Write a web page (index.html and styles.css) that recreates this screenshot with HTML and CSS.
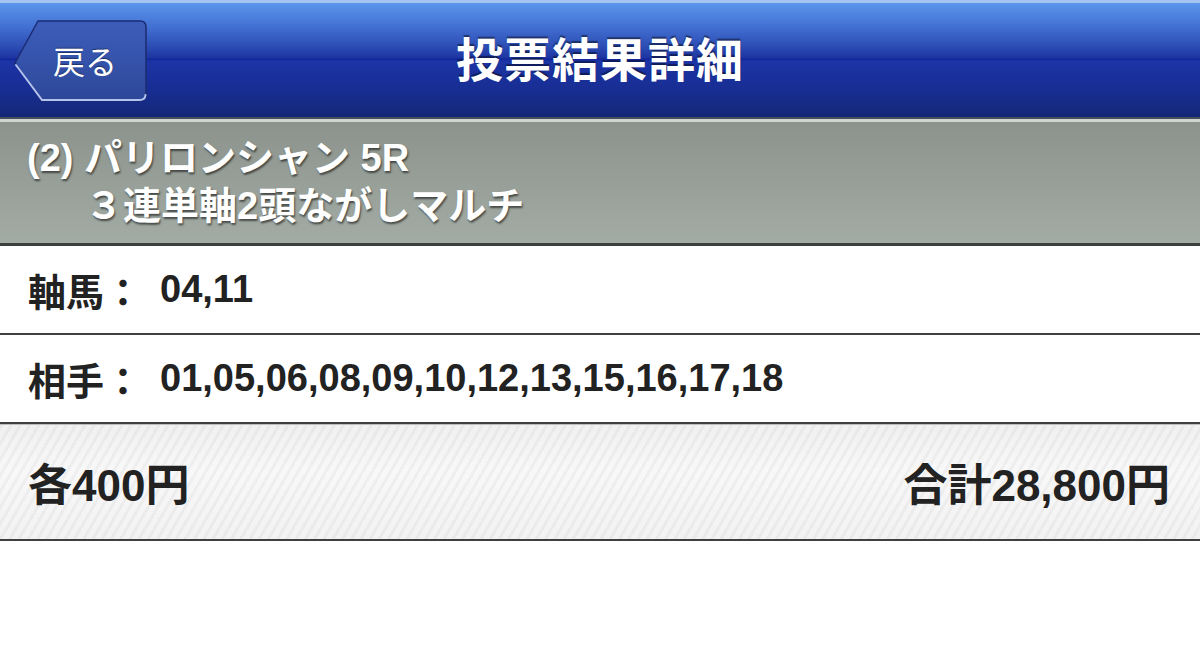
FILE: index.html
```html
<!DOCTYPE html>
<html>
<head>
  <meta charset="utf-8">
  <title>投票結果詳細</title>
  <link rel="stylesheet" href="styles.css">
</head>
<body>
  <div class="navbar">
    <a class="back-button" href="#">
      <svg class="back-shape" width="138" height="84" viewBox="0 0 138 84">
        <defs>
          <linearGradient id="backFill" x1="0" y1="0" x2="0" y2="1">
            <stop offset="0" stop-color="#3d5dba"/>
            <stop offset="0.5" stop-color="#3553aa"/>
            <stop offset="1" stop-color="#2d4796"/>
          </linearGradient>
        </defs>
        <path d="M4 44 L27 2 L129 2 Q135 2 135 8 L135 76 Q135 82 129 82 L31 82 Z"
              fill="url(#backFill)" stroke="#1b2b72" stroke-width="1.5" stroke-linejoin="round"/>
        <path d="M5 46 L31 81 L129 81 Q134 81 134.5 76"
              fill="none" stroke="#b4c2ee" stroke-width="2" stroke-linecap="round"/>
      </svg>
      <span class="back-label">戻る</span>
    </a>
    <h1 class="title">投票結果詳細</h1>
  </div>

  <div class="race-info">
    <div class="race-name">(2) パリロンシャン 5R</div>
    <div class="bet-type">３連単軸2頭ながしマルチ</div>
  </div>

  <div class="bet-row">
    <span class="bet-label">軸馬：</span>
    <span class="bet-value">04,11</span>
  </div>
  <div class="bet-row">
    <span class="bet-label">相手：</span>
    <span class="bet-value">01,05,06,08,09,10,12,13,15,16,17,18</span>
  </div>

  <div class="total-row">
    <span>各400円</span>
    <span>合計28,800円</span>
  </div>
</body>
</html>
```

FILE: styles.css
```css
body {
  margin: 0;
  background-color: #fff;
  font-family: "Liberation Sans", "Noto Sans CJK JP", sans-serif;
}

.navbar {
  position: relative;
  height: 114px;
  display: flex;
  align-items: center;
  justify-content: center;
  border-top: 3px solid #a4c4f2;
  border-bottom: 2px solid #46505a;
  background: linear-gradient(to bottom,
    #5b96eb 0px,
    #4676d8 20px,
    #2c4cb4 44px,
    #1d34a0 55px,
    #10249a 56px,
    #1c34a6 58px,
    #182e94 85px,
    #142876 114px);
}

.back-button {
  position: absolute;
  left: 11px;
  top: 16px;
  width: 138px;
  height: 84px;
  display: flex;
  align-items: center;
  text-decoration: none;
}

.back-shape {
  position: absolute;
  left: 0;
  top: 0;
}

.back-label {
  position: relative;
  margin-left: 42px;
  margin-bottom: 3px;
  color: #fff;
  font-size: 32px;
  font-family: "Noto Sans CJK JP", sans-serif;
  text-shadow: 0 -1px 1px rgba(0, 0, 0, 0.4);
}

.title {
  margin: 0 0 8px;
  color: #fff;
  font-size: 47px;
  font-weight: bold;
  letter-spacing: 1px;
  text-shadow: 0 -2px 1px rgba(0, 0, 0, 0.45);
}

.race-info {
  padding: 12px 27px 13px;
  border-top: 3px solid #d2d6d2;
  border-bottom: 3px solid #3c403c;
  background: linear-gradient(to bottom, #8b938c, #a3aba5);
  color: #fff;
  font-size: 38px;
  font-weight: bold;
  line-height: 48px;
  text-shadow: 1px 2px 2px rgba(0, 0, 0, 0.55);
}

.bet-type {
  padding-left: 58px;
}

.bet-row {
  height: 87px;
  display: flex;
  align-items: center;
  padding-left: 28px;
  border-bottom: 2px solid #3f3f3f;
  color: #222;
  font-size: 38px;
  font-weight: bold;
}

.bet-value {
  margin-left: 18px;
}

.total-row {
  height: 114px;
  display: flex;
  align-items: center;
  justify-content: space-between;
  padding: 0 30px 0 28px;
  border-top: 1px solid #bdbdbd;
  border-bottom: 2px solid #3f3f3f;
  background:
    repeating-linear-gradient(120deg, rgba(0, 0, 0, 0.035) 0 3px, rgba(0, 0, 0, 0) 3px 8px),
    linear-gradient(to bottom, #f0f0f0, #f8f8f8 40%, #f2f2f2);
  color: #222;
  font-size: 44px;
  font-weight: bold;
}
```
